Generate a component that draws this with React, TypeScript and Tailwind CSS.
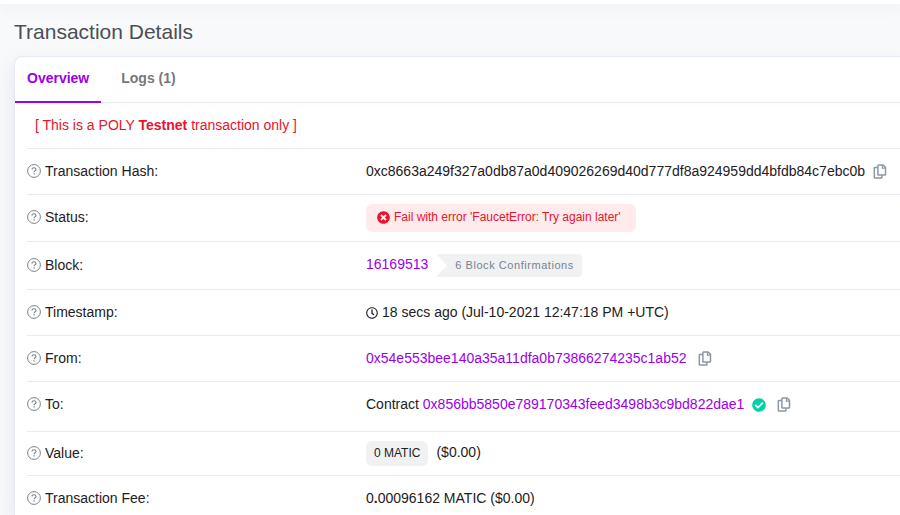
import type { ReactNode } from "react";
import { FaCheckCircle, FaRegClock, FaTimesCircle } from "react-icons/fa";

function HelpIcon() {
  return (
    <svg viewBox="0 0 14 14" className="size-3.5 shrink-0 text-[#77838f]" fill="none" stroke="currentColor" aria-hidden="true">
      <circle cx="7" cy="7" r="6.4" />
      <path d="M5 5.6C5 4.4 5.8 3.7 7 3.7s2 .7 2 1.7c0 1.4-1.9 1.4-1.9 2.8" strokeWidth="1.1" />
      <path d="M7.1 9.3v1.3" strokeWidth="1.3" />
    </svg>
  );
}

function CopyButton({ label }: { label: string }) {
  return (
    <button type="button" aria-label={label} className="shrink-0 text-[#8c98a4]">
      <svg viewBox="0 0 14 15" className="h-[15px] w-3.5" fill="none" stroke="currentColor" strokeWidth="1.5" strokeLinejoin="round" aria-hidden="true">
        <path d="M5.5 1h4.6l2.4 2.4v7.1a.6.6 0 0 1-.6.6H5.5a.6.6 0 0 1-.6-.6V1.6a.6.6 0 0 1 .6-.6Z" />
        <path d="M9.4 1.2v3h3" strokeWidth="1.2" />
        <path d="M4.8 3.6H1.9a.6.6 0 0 0-.6.6v9.2a.6.6 0 0 0 .6.6h6.4a.6.6 0 0 0 .6-.6v-2.3" />
      </svg>
    </button>
  );
}

function Row({ label, size, children }: { label: string; size: string; children: ReactNode }) {
  return (
    <div className={`flex items-center border-t border-[#e7eaf3] ${size}`}>
      <dt className="flex w-[339px] shrink-0 items-center gap-1 pb-0.5">
        <HelpIcon />
        {label}
      </dt>
      <dd className="flex items-center whitespace-nowrap">{children}</dd>
    </div>
  );
}

export default function App() {
  return (
    <div className="flex min-h-screen flex-col overflow-hidden bg-[#f8f9fa] font-['Liberation_Sans',Arial,sans-serif] text-sm text-[#1e2022]">
      <header className="h-1 bg-white shadow-[0_4px_12px_rgba(140,152,164,0.15)]" />
      <main className="flex flex-1 flex-col pl-3.5">
        <h1 className="pt-3.5 pb-2.5 text-[21px] leading-7 text-[#4a4f55]">Transaction Details</h1>
        <section className="flex-1 rounded-tl-lg border-t border-l border-[#e7eaf3] bg-white shadow-[0_8px_20px_rgba(140,152,164,0.2)]">
          <nav className="flex border-b border-[#e7eaf3] font-bold">
            <button type="button" className="-mb-px h-[46px] border-b-2 border-[#9b00e8] px-3 pb-0.5 text-[#9b00e8]">
              Overview
            </button>
            <button type="button" className="px-5 pb-1 text-[#77787c]">
              Logs (1)
            </button>
          </nav>
          <div className="pl-3">
            <p className="px-2 py-3 leading-[21px] text-[#e8132c]">
              [ This is a POLY <strong>Testnet</strong> transaction only ]
            </p>
            <dl>
              <Row label="Transaction Hash:" size="min-h-[46px]">
                <span className="mr-2 pb-0.5">0xc8663a249f327a0db87a0d409026269d40d777df8a924959dd4bfdb84c7ebc0b</span>
                <CopyButton label="Copy transaction hash" />
              </Row>
              <Row label="Status:" size="min-h-[47px]">
                <span className="flex h-7 items-center gap-1 rounded-md bg-[#ffebeb] pr-[15px] pb-0.5 pl-[11px] text-xs text-[#e8132c]">
                  <FaTimesCircle className="size-[13px]" aria-hidden="true" />
                  Fail with error 'FaucetError: Try again later'
                </span>
              </Row>
              <Row label="Block:" size="min-h-12">
                <a href="#block" className="mr-2 pb-1 text-[#9b00e8]">16169513</a>
                <span className="flex h-[23px] items-center rounded-r-[4px] bg-[#eff1f3] pr-2 text-[11px] tracking-wider text-[#77838f]">
                  <svg viewBox="0 0 11 23" className="mr-2 h-[23px] w-[11px]" aria-hidden="true">
                    <path d="M0 0 11 11.5 0 23Z" fill="#fff" />
                  </svg>
                  6 Block Confirmations
                </span>
              </Row>
              <Row label="Timestamp:" size="min-h-[46px]">
                <FaRegClock className="mr-1 size-3" aria-hidden="true" />
                <time className="pb-0.5">18 secs ago (Jul-10-2021 12:47:18 PM +UTC)</time>
              </Row>
              <Row label="From:" size="min-h-[46px]">
                <a href="#from" className="mr-[11px] pb-0.5 text-[#9b00e8]">0x54e553bee140a35a11dfa0b73866274235c1ab52</a>
                <CopyButton label="Copy sender address" />
              </Row>
              <Row label="To:" size="min-h-[50px] pb-1">
                <span className="pb-0.5">
                  Contract <a href="#to" className="text-[#9b00e8]">0x856bb5850e789170343feed3498b3c9bd822dae1</a>
                </span>
                <FaCheckCircle className="mr-[11px] ml-2 size-3.5 text-[#00d2a8]" aria-label="Verified" />
                <CopyButton label="Copy recipient address" />
              </Row>
              <Row label="Value:" size="min-h-11">
                <span className="mr-2 flex h-[25px] items-center rounded-md bg-[#eff1f3] px-2 pb-0.5 text-xs">0 MATIC</span>
                <span className="pb-1">($0.00)</span>
              </Row>
              <Row label="Transaction Fee:" size="min-h-[39px] pt-2">
                <span className="pb-0.5">0<b>.</b>00096162 MATIC ($0.00)</span>
              </Row>
            </dl>
          </div>
        </section>
      </main>
    </div>
  );
}
